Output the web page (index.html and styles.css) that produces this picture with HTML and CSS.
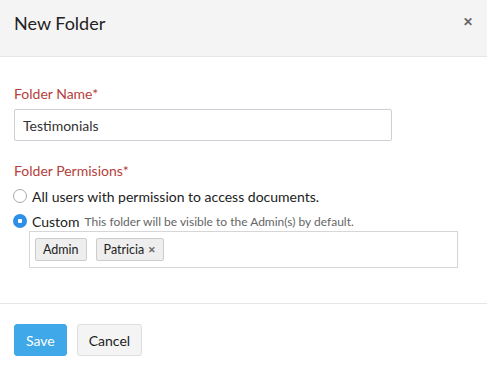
FILE: index.html
```html
<!DOCTYPE html>
<html lang="en">
<head>
    <meta charset="UTF-8">
    <meta name="viewport" content="width=device-width, initial-scale=1.0">
    <title>New Folder</title>
    <link rel="stylesheet" href="styles.css">
</head>
<body>
    <div class="dialog">
      <div class="dialog-header">
        <h2 class="dialog-title">New Folder</h2>
        <span class="close">&#x2715;</span>
      </div>

      <div class="dialog-body">
        <div class="field">
          <label class="field-label" for="folderName">Folder Name*</label>
          <input type="text" id="folderName" class="text-input" value="Testimonials">
        </div>

        <div class="field">
          <div class="field-label">Folder Permisions*</div>
          <label class="radio-row">
            <span class="radio"></span>
            All users with permission to access documents.
          </label>
          <label class="radio-row">
            <span class="radio checked"></span>
            Custom <span class="hint">This folder will be visible to the Admin(s) by default.</span>
          </label>
          <div class="tag-box">
            <span class="tag">Admin</span>
            <span class="tag">Patricia <span class="tag-remove">&#x2715;</span></span>
          </div>
        </div>
      </div>

      <div class="dialog-footer">
        <button type="submit" class="btn btn-primary">Save</button>
        <button type="button" class="btn">Cancel</button>
      </div>
    </div>
</body>
</html>
```

FILE: styles.css
```css
body {
  margin: 0;
  background-color: #fff;
  font-family: Lato, "Open Sans", Arial, sans-serif;
  color: #333;
}

.dialog {
  width: 487px;
}

.dialog-header {
  display: flex;
  justify-content: space-between;
  align-items: flex-start;
  height: 57px;
  padding: 0 14px;
  box-sizing: border-box;
  background-color: #f4f4f4;
  border-bottom: 1px solid #e6e6e6;
}

.dialog-title {
  margin: 12px 0 0;
  font-size: 18px;
  font-weight: normal;
  color: #222;
}

.close {
  margin-top: 14px;
  font-size: 12px;
  font-weight: bold;
  color: #666;
}

.dialog-body {
  padding: 28px 14px 35px;
  border-bottom: 1px solid #e6e6e6;
}

.field + .field {
  margin-top: 21px;
}

.field-label {
  display: block;
  font-size: 14px;
  color: #b5413c;
  margin-bottom: 7px;
}

.text-input {
  width: 378px;
  height: 32px;
  padding: 0 8px;
  border: 1px solid #ccd0d6;
  border-radius: 2px;
  box-sizing: border-box;
  font-family: inherit;
  font-size: 14px;
  color: #333;
}

.radio-row {
  display: flex;
  align-items: center;
  gap: 5px;
  height: 20px;
  margin-left: -1px;
  font-size: 14px;
  color: #222;
}

.radio-row + .radio-row {
  margin-top: 5px;
}

.radio {
  width: 12px;
  height: 12px;
  border: 1px solid #aaa;
  border-radius: 50%;
  background-color: #fff;
  flex: none;
}

.radio.checked {
  width: 14px;
  height: 14px;
  border: none;
  background: radial-gradient(circle, #fff 0 2px, #2d8fe6 2.5px);
}

.hint {
  font-size: 12px;
  color: #666;
}

.tag-box {
  display: flex;
  gap: 9px;
  width: 429px;
  height: 37px;
  margin: 0 15px;
  padding: 6px 5px;
  box-sizing: border-box;
  border: 1px solid #d6d6d6;
}

.tag {
  display: flex;
  align-items: center;
  gap: 4px;
  padding: 0 7px;
  height: 23px;
  box-sizing: border-box;
  background-color: #eee;
  border: 1px solid #ccc;
  border-radius: 2px;
  font-size: 12.5px;
  color: #222;
}

.tag-remove {
  font-size: 9px;
  font-weight: bold;
  color: #666;
}

.dialog-footer {
  display: flex;
  gap: 10px;
  padding: 20px 14px;
}

.btn {
  height: 32px;
  padding: 0 11px;
  border: 1px solid #ddd;
  border-radius: 3px;
  background-color: #f4f4f4;
  font-family: inherit;
  font-size: 14px;
  color: #222;
}

.btn-primary {
  background-color: #3ea8e8;
  border-color: #3ea8e8;
  color: #fff;
}
```
